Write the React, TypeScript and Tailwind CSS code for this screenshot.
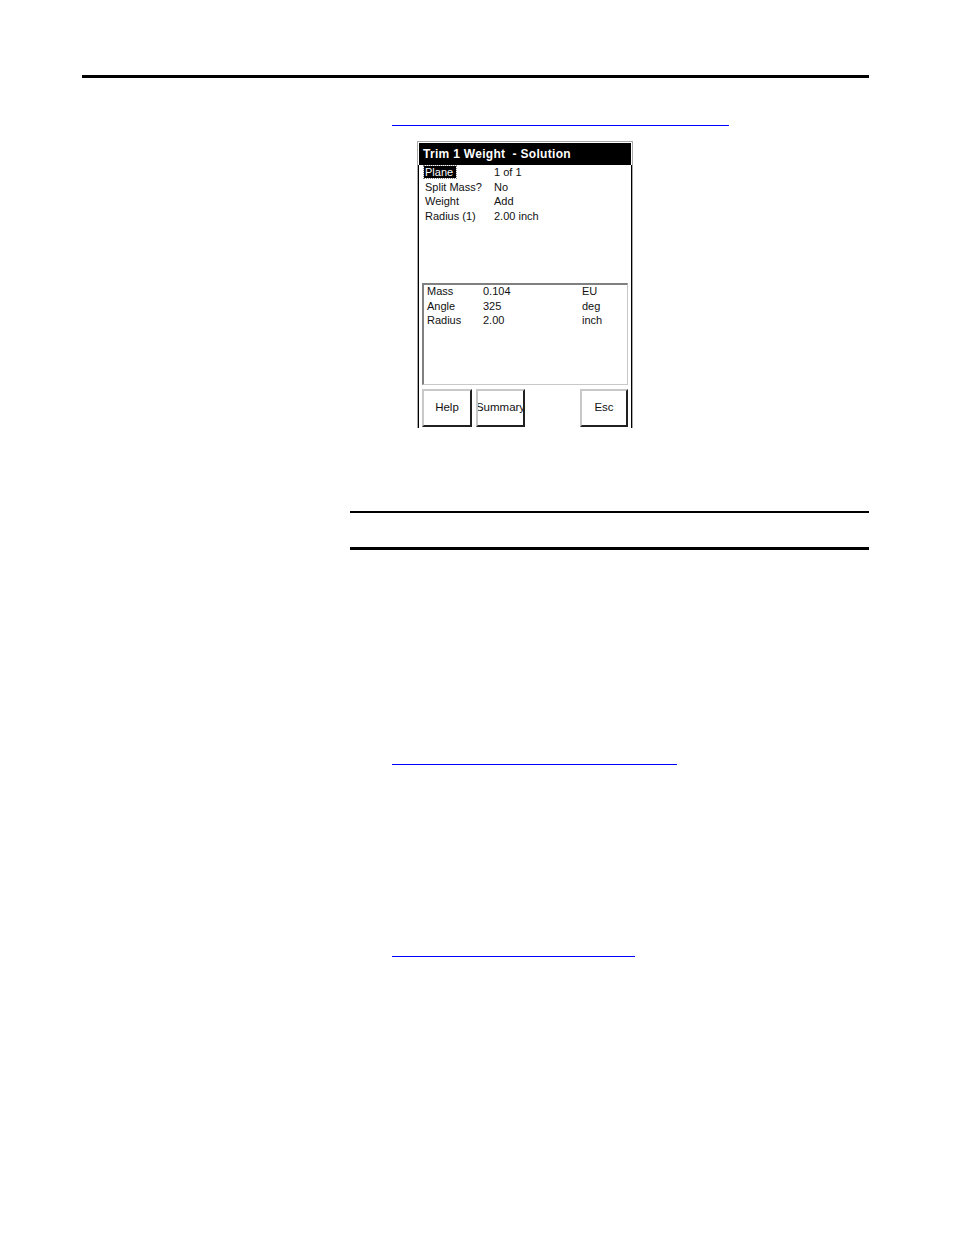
import React from "react";

const font = { fontFamily: '"Liberation Sans", Arial, sans-serif' };

function Btn({ label, w }: { label: string; w: string }) {
  return (
    <div
      className={`${w} h-[38px] flex items-center justify-center overflow-hidden whitespace-nowrap bg-white border-t-2 border-l-2 border-t-[#c8c8c8] border-l-[#c8c8c8] border-r-2 border-b-2 border-r-[#202020] border-b-[#202020] text-[11.5px] text-[#111]`}
    >
      {label}
    </div>
  );
}

export default function App() {
  const rows: [string, string, boolean][] = [
    ["Plane", "1 of 1", true],
    ["Split Mass?", "No", false],
    ["Weight", "Add", false],
    ["Radius (1)", "2.00 inch", false],
  ];
  const res: [string, string, string][] = [
    ["Mass", "0.104", "EU"],
    ["Angle", "325", "deg"],
    ["Radius", "2.00", "inch"],
  ];
  return (
    <div className="w-[954px] h-[1235px] bg-white relative overflow-hidden" style={font}>
      <div className="pt-[75px]">
        <div className="ml-[82px] w-[787px] h-[3px] bg-black" />
        <div className="ml-[392px] mt-[47px] w-[337px] h-px bg-[#0000ff]" />

        {/* device screen */}
        <div className="ml-[417px] mt-[15px] w-[216px] h-[287px] border-t border-l border-r border-[#a8a8a8] flex flex-col">
          <div className="mx-px mt-px h-[22px] bg-black text-white font-bold text-[12px] tracking-[0.3px] pl-[4px] flex items-center">
            Trim 1 Weight&nbsp;&nbsp;- Solution
          </div>
          <div className="flex-1 border-l border-r border-black flex flex-col">
            <div className="pl-[6px] text-[11px] text-[#111]">
              {rows.map(([l, v, hl]) => (
                <div key={l} className="flex h-[14.5px] items-center">
                  <div className="w-[69px]">
                    {hl ? (
                      <span className="bg-black text-white outline-1 outline-dotted outline-[#888] pl-px pr-[3px] -ml-px">
                        {l}
                      </span>
                    ) : (
                      l
                    )}
                  </div>
                  <div>{v}</div>
                </div>
              ))}
            </div>
            <div className="mt-[60px] ml-[3px] mr-[3px] h-[102px] border-t-2 border-l-2 border-t-[#808080] border-l-[#808080] border-r border-b border-r-[#c8c8c8] border-b-[#c8c8c8] pl-[3px] text-[11px] text-[#111]">
              <div className="-mt-[1px]">
                {res.map(([a, b, c]) => (
                  <div key={a} className="flex h-[14.5px] items-center">
                    <div className="w-[56px]">{a}</div>
                    <div className="w-[99px]">{b}</div>
                    <div>{c}</div>
                  </div>
                ))}
              </div>
            </div>
            <div className="ml-[3px] mr-[3px] mt-[4px] flex gap-[4px]">
              <Btn label="Help" w="w-[50px]" />
              <Btn label="Summary" w="w-[49px]" />
              <div className="flex-1" />
              <Btn label="Esc" w="w-[48px]" />
            </div>
          </div>
        </div>

        <div className="ml-[350px] mt-[83px] w-[519px] h-[2px] bg-black" />
        <div className="ml-[350px] mt-[34px] w-[519px] h-[3px] bg-black" />

        <div className="ml-[392px] mt-[214px] w-[285px] h-px bg-[#0000ff]" />
        <div className="ml-[392px] mt-[191px] w-[243px] h-px bg-[#0000ff]" />
      </div>
    </div>
  );
}
